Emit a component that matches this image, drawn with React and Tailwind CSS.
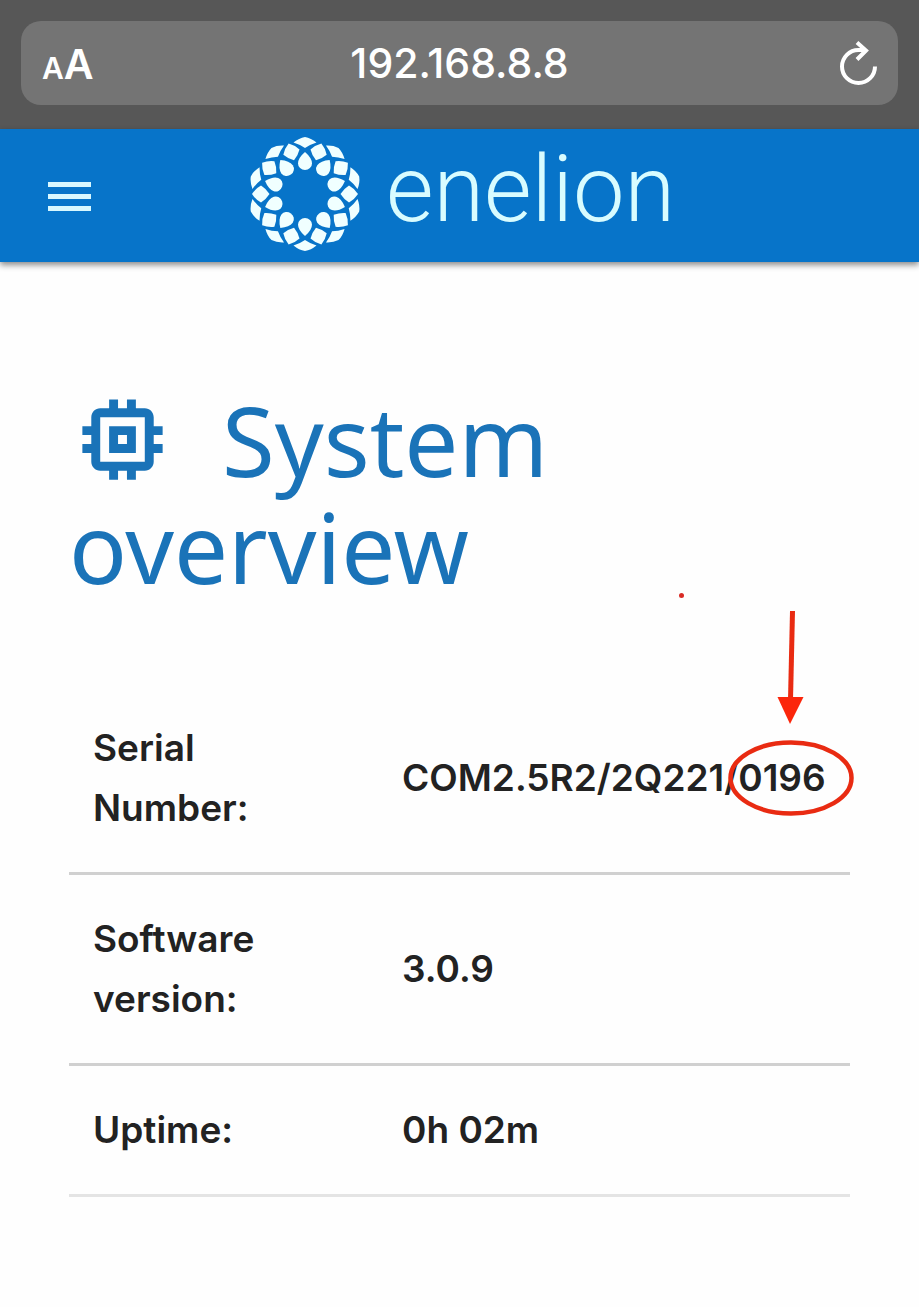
import React, { useState } from "react";
import { MdMemory } from "react-icons/md";


const rows = [
  { id: "serial", label: "Serial Number:", value: "COM2.5R2/2Q221/0196", marked: true },
  { id: "software", label: "Software version:", value: "3.0.9" },
  { id: "uptime", label: "Uptime:", value: "0h 02m" },
];

const petals = [0, 36, 72, 108, 144, 180, 216, 252, 288, 324];


function Logo() {
  return (
    <svg className="h-[114px] w-[114px] shrink-0" viewBox="-57 -57 114 114" fill="#f0ffff" aria-hidden="true">
      {petals.map((angle) => (
        <g key={angle} transform={`rotate(${angle})`}>
          {/* outer tip, inner drop, and the diamond between two petals */}
          <path d="M-11.5 -51.5 Q-6 -56 0 -57 Q6 -56 11.5 -51.5 Q5 -49.5 0 -46 Q-5 -49.5 -11.5 -51.5Z" />
          <path d="M0 -42 Q7 -36 7 -30.5 A7 6.5 0 0 1 -7 -30.5 Q-7 -36 0 -42Z" />
          <path d="M0 -53 Q5.5 -49.5 8.5 -44 Q5.5 -39 0 -35.5 Q-5.5 -39 -8.5 -44 Q-5.5 -49.5 0 -53Z" transform="rotate(18)" />
        </g>
      ))}
    </svg>
  );
}


function AddressBar() {
  const [address, setAddress] = useState("192.168.8.8");

  return (
    <div className="bg-[#575757] px-[21px] pt-[21px] pb-6">
      <div className="flex h-[84px] items-center rounded-[20px] bg-[#747474] px-[21px] pt-0.5 text-white">
        <button className="flex w-16 items-baseline font-semibold" aria-label="Text size">
          <span className="text-[30px] leading-none">A</span>
          <span className="text-[41px] leading-none">A</span>
        </button>
        <input
          className="min-w-0 flex-1 bg-transparent text-center text-[41px] font-medium outline-none"
          aria-label="Address"
          value={address}
          onChange={(event) => setAddress(event.target.value)}
        />
        <button className="flex w-16 justify-end" aria-label="Reload">
          <svg className="h-[46px] w-[38px]" viewBox="0 0 38 46" fill="none" stroke="currentColor" strokeWidth="4">
            <path d="M36 25.5 A16.5 16.5 0 1 1 19.5 9 H25" />
            <path d="M18 1.5 L27 9.5 L18 18.5" />
          </svg>
        </button>
      </div>
    </div>
  );
}


function Header() {
  return (
    <header className="relative flex h-[133px] items-center justify-center bg-[#0774c9] pb-1 pl-1 shadow-[0_3px_6px_rgba(0,0,0,0.45)]">
      <button className="absolute left-12 top-[53px]" aria-label="Menu">
        <svg className="h-[30px] w-[43px]" viewBox="0 0 43 30" fill="#d8f8ff">
          <path d="M0 0H43V5H0zM0 12H43V17H0zM0 24H43V29H0z" />
        </svg>
      </button>
      <a href="#" className="flex items-start gap-6 text-[#d8fcff]">
        <Logo />
        <span className="font-['Roboto'] text-[92px] leading-[106px] font-light">enelion</span>
      </a>
    </header>
  );
}


function Marker() {
  return (
    <svg
      className="pointer-events-none absolute -right-2.5 bottom-[47px] h-[240px] w-[190px]"
      viewBox="670 585 190 240"
      fill="none"
      stroke="#e92b12"
      aria-hidden="true"
    >
      <circle cx="681.5" cy="595.5" r="2.5" fill="#d92b25" stroke="none" />
      <path d="M792.5 611 L790.5 700" strokeWidth="5" />
      <path d="M777.5 697 H803.5 L790 724Z" fill="#fb260b" stroke="none" />
      <ellipse cx="791" cy="778" rx="60.5" ry="35.5" strokeWidth="4.5" />
    </svg>
  );
}


function App() {
  return (
    <div className="min-h-screen bg-[#fefefe] font-['Inter',sans-serif] text-[#222222]">
      <AddressBar />
      <Header />

      <main className="px-[69px] pt-[124px]">
        <h1 className="font-['Noto_Sans'] text-[96px] leading-[107px] text-[#1a73b8]">
          <MdMemory className="mr-[46px] inline-block size-[107px] align-top" aria-hidden="true" />
          System overview
        </h1>

        <table className="mt-[84px] w-full border-collapse text-[37px] leading-[60px] font-semibold">
          <tbody>
            {rows.map((row) => (
              <tr key={row.id} className="border-b-3 border-[#d0d0d0] last:border-[#e4e4e4]">
                <th scope="row" className="w-[309px] py-[34px] pr-20 pl-6 text-left font-semibold">
                  {row.label}
                </th>
                <td className="relative py-[34px] pl-6 whitespace-nowrap">
                  {row.value}
                  {row.marked && <Marker />}
                </td>
              </tr>
            ))}
          </tbody>
        </table>
      </main>
    </div>
  );
}

export default App;
